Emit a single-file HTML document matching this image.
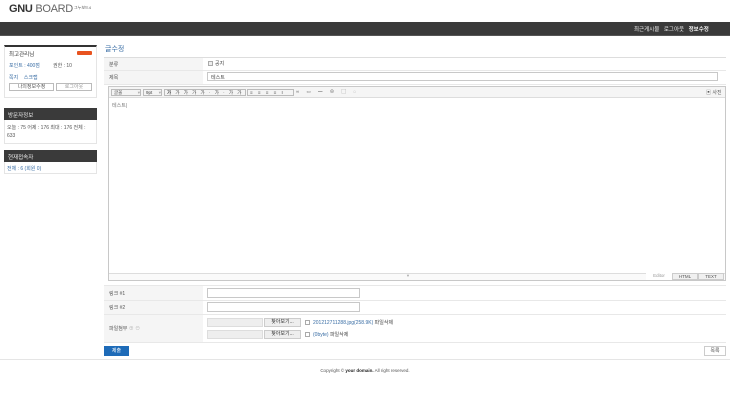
<!DOCTYPE html>
<html><head><meta charset="utf-8"><style>
*{margin:0;padding:0;box-sizing:border-box}
body{width:730px;height:403px;background:#fff;font-family:"Liberation Sans","Noto Sans CJK KR",sans-serif;font-size:5px;color:#555;position:relative;overflow:hidden}
.a{position:absolute;white-space:nowrap}
.lbl{background:#f5f5f5}
.in{border:1px solid #c8c8c8;background:#fff}
.tb{border:1px solid #bbb;background:#f4f4f4;height:7px;top:89px;overflow:hidden;font-size:4.5px;line-height:5px;color:#444}
</style></head><body>
<div class="a" style="left:9px;top:3px;font-size:11px;color:#333;letter-spacing:-0.3px"><b>GNU</b> <span style="color:#666">BOARD</span></div>
<div class="a" style="left:74px;top:5px;font-size:4px;color:#555">그누보드4</div>
<div class="a" style="left:0;top:22px;width:730px;height:14px;background:#3a3a3a;border-bottom:1px solid #555"></div>
<div class="a" style="left:634px;top:25px;font-size:5.5px;color:#eee;word-spacing:3px">최근게시물 로그아웃 <b>정보수정</b></div>

<div class="a" style="left:4px;top:45px;width:93px;height:53px;border:1px solid #e5e5e5;border-top:2px solid #333"></div>
<div class="a" style="left:9px;top:50px;font-size:5.5px;color:#333">최고관리님</div>
<div class="a" style="left:77px;top:51px;width:15px;height:4px;background:#e8531f;border-radius:1px"></div>
<div class="a" style="left:9px;top:62px;color:#3a6ea5">포인트 : 400점</div>
<div class="a" style="left:53px;top:62px">권한 : 10</div>
<div class="a" style="left:9px;top:74px;color:#3a6ea5">쪽지 &nbsp;&nbsp; 스크랩</div>
<div class="a" style="left:9px;top:83px;width:45px;height:8px;border:1px solid #bbb;text-align:center;line-height:6px">나의정보수정</div>
<div class="a" style="left:56px;top:83px;width:36px;height:8px;border:1px solid #bbb;text-align:center;line-height:6px;color:#999">로그아웃</div>
<div class="a" style="left:4px;top:108px;width:93px;height:36px;border:1px solid #e5e5e5"></div>
<div class="a" style="left:4px;top:108px;width:93px;height:12px;background:#3a3a3a;color:#eee;padding:3px 4px;font-size:5.5px">방문자정보</div>
<div class="a" style="left:7px;top:124px;width:88px;line-height:8px;white-space:normal">오늘 : 75 어제 : 176 최대 : 176 전체 : 633</div>
<div class="a" style="left:4px;top:150px;width:93px;height:24px;border:1px solid #e5e5e5"></div>
<div class="a" style="left:4px;top:150px;width:93px;height:12px;background:#3a3a3a;color:#eee;padding:3px 4px;font-size:5.5px">현재접속자</div>
<div class="a" style="left:7px;top:165px;color:#3a6ea5">전체 : 6 (회원 0)</div>

<div class="a" style="left:105px;top:44px;font-size:7px;color:#3a6ea5">글수정</div>
<div class="a" style="left:104px;top:57px;width:622px;height:1px;background:#ddd"></div>
<div class="a lbl" style="left:104px;top:58px;width:99px;height:26px"></div>
<div class="a" style="left:104px;top:70px;width:622px;height:1px;background:#e8e8e8"></div>
<div class="a" style="left:104px;top:84px;width:622px;height:1px;background:#e8e8e8"></div>
<div class="a" style="left:109px;top:61px">분류</div>
<div class="a" style="left:109px;top:74px">제목</div>
<div class="a" style="left:208px;top:61px;width:5px;height:5px;border:1px solid #aaa;background:#eee"></div>
<div class="a" style="left:215px;top:60px;color:#444">공지</div>
<div class="a in" style="left:207px;top:72px;width:511px;height:9px;padding:1px 3px;color:#444">테스트</div>

<div class="a" style="left:108px;top:86px;width:618px;height:195px;border:1px solid #c8c8c8"></div>
<div class="a" style="left:109px;top:87px;width:616px;height:11px;background:#f5f5f5;border-bottom:1px solid #ddd"></div>
<div class="a tb" style="left:111px;width:30px;padding-left:2px">글꼴 <span style="float:right;color:#aaa">▾</span></div>
<div class="a tb" style="left:143px;width:19px;padding-left:2px">9pt <span style="float:right;color:#aaa">▾</span></div>
<div class="a tb" style="left:164px;width:82px;padding-left:2px;letter-spacing:1.5px"><b>가</b> 가 가 가 가 · 가 · 가 가</div>
<div class="a tb" style="left:247px;width:47px;padding-left:2px;letter-spacing:2px">≡ ≡ ≡ ≡ I</div>
<div class="a" style="left:296px;top:89px;font-size:4.5px;color:#666;letter-spacing:3px">∞ ▭ ━ ⊕ ▢ ◌</div>
<div class="a" style="left:706px;top:89px;font-size:5px">▣ 사진</div>
<div class="a" style="left:112px;top:102px;color:#777">테스트|</div>
<div class="a" style="left:109px;top:273px;width:616px;height:7px;border-top:1px solid #ddd;background:#fafafa"></div>
<div class="a" style="left:406px;top:273px;font-size:4px;color:#aaa">▼</div>
<div class="a" style="left:646px;top:273px;width:26px;height:7px;font-size:4.5px;text-align:center;background:#fff;color:#999">Editor</div>
<div class="a" style="left:672px;top:273px;width:26px;height:7px;font-size:4.5px;text-align:center;border:1px solid #ccc;background:#f0f0f0">HTML</div>
<div class="a" style="left:698px;top:273px;width:26px;height:7px;font-size:4.5px;text-align:center;border:1px solid #ccc;background:#f0f0f0">TEXT</div>

<div class="a" style="left:104px;top:285px;width:622px;height:1px;background:#e8e8e8"></div>
<div class="a lbl" style="left:104px;top:286px;width:99px;height:56px"></div>
<div class="a" style="left:104px;top:300px;width:622px;height:1px;background:#e8e8e8"></div>
<div class="a" style="left:104px;top:314px;width:622px;height:1px;background:#e8e8e8"></div>
<div class="a" style="left:104px;top:342px;width:622px;height:1px;background:#e8e8e8"></div>
<div class="a" style="left:109px;top:290px">링크 #1</div>
<div class="a" style="left:109px;top:304px">링크 #2</div>
<div class="a" style="left:109px;top:325px">파일첨부 <span style="color:#bbb">⊕ ⊖</span></div>
<div class="a in" style="left:207px;top:288px;width:153px;height:10px"></div>
<div class="a in" style="left:207px;top:302px;width:153px;height:10px"></div>
<div class="a" style="left:207px;top:318px;width:56px;height:9px;background:#eee;border:1px solid #ddd"></div>
<div class="a" style="left:264px;top:318px;width:37px;height:9px;background:#eee;border:1px solid #ccc;color:#333;text-align:center;line-height:7px">찾아보기...</div>
<div class="a" style="left:305px;top:320px;width:5px;height:5px;border:1px solid #aaa"></div>
<div class="a" style="left:313px;top:319px;color:#3a6ea5">201212711288.jpg(258.9K) <span style="color:#444">파일삭제</span></div>
<div class="a" style="left:207px;top:330px;width:56px;height:9px;background:#eee;border:1px solid #ddd"></div>
<div class="a" style="left:264px;top:330px;width:37px;height:9px;background:#eee;border:1px solid #ccc;color:#333;text-align:center;line-height:7px">찾아보기...</div>
<div class="a" style="left:305px;top:332px;width:5px;height:5px;border:1px solid #aaa"></div>
<div class="a" style="left:313px;top:331px;color:#3a6ea5">(0byte) <span style="color:#444">파일삭제</span></div>

<div class="a" style="left:104px;top:346px;width:25px;height:10px;background:#1e6bb8;color:#fff;text-align:center;line-height:10px">제출</div>
<div class="a" style="left:704px;top:346px;width:22px;height:10px;border:1px solid #ccc;text-align:center;line-height:8px">목록</div>
<div class="a" style="left:0;top:359px;width:730px;height:1px;background:#e5e5e5"></div>
<div class="a" style="left:0;top:368px;width:730px;text-align:center;font-size:4.5px;color:#555">Copyright © <b style="color:#222">your domain.</b> All right reserved.</div>
</body></html>
